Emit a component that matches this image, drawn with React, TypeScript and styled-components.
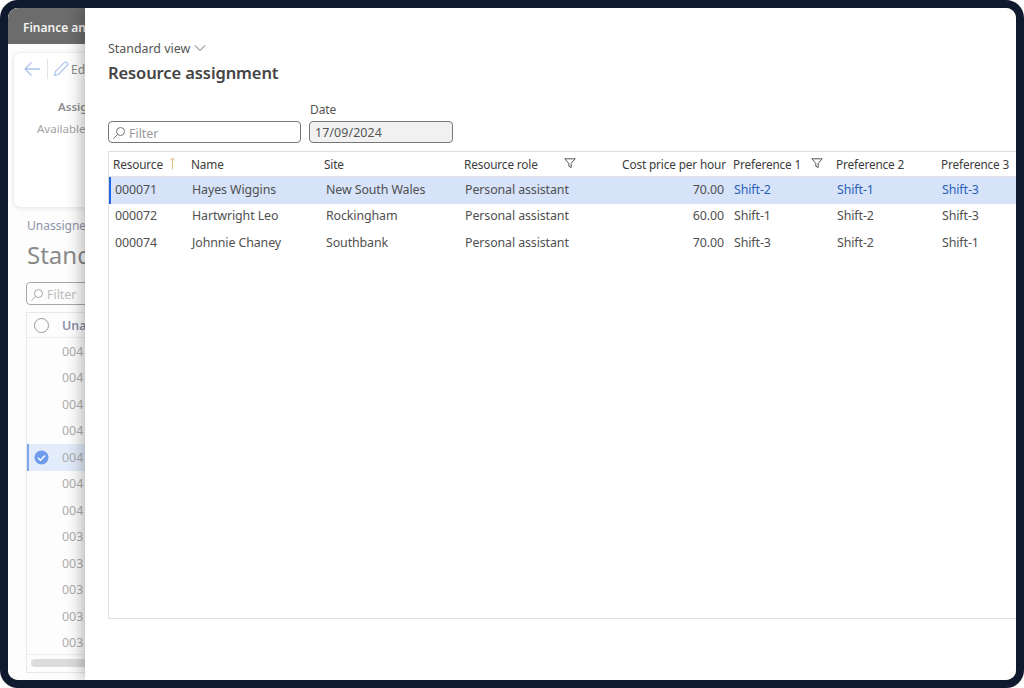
import React from "react";
import styled, { createGlobalStyle } from "styled-components";

const Global = createGlobalStyle`
  html, body { margin: 0; padding: 0; background: #fff; }
  #root { width: 1024px; height: 688px; }
  * { box-sizing: border-box; }
`;

const Frame = styled.div`
  width: 1024px;
  height: 688px;
  border: 8px solid #0f1a2e;
  border-radius: 18px;
  overflow: hidden;
  display: flex;
  background: #fff;
  font-family: "Noto Sans", "Open Sans", sans-serif;
  font-size: 12.4px;
  color: #4a4a4a;
`;

const Backdrop = styled.div`
  width: 77px;
  flex: none;
  overflow: hidden;
  display: flex;
  flex-direction: column;
  background: #fdfdfd;
`;

const AppBar = styled.div`
  height: 36px;
  flex: none;
  width: 200px;
  background: #6c6c6c;
  color: #f4f4f4;
  font-weight: 600;
  font-size: 12px;
  line-height: 40px;
  padding-left: 15px;
  white-space: nowrap;
`;

const SummaryCard = styled.div`
  margin: 8px 0 0 5px;
  width: 200px;
  height: 156px;
  flex: none;
  border: 1px solid #eeeeee;
  border-radius: 8px;
  box-shadow: 0 1px 4px rgba(0, 0, 0, 0.08);
  background: #fff;
  padding: 6px 0 0 9px;
`;

const CardBar = styled.div`
  display: flex;
  align-items: center;
  height: 20px;
  color: #8a8a8a;
  font-size: 12px;
`;

const Sep = styled.span`
  width: 1px;
  height: 20px;
  background: #e4e4e4;
  margin: 0 5px 0 6px;
`;

const EditLabel = styled.span`
  margin-left: 2px;
`;

const CardLabel = styled.div<{ $bold?: boolean; $indent: number }>`
  margin-left: ${(p) => p.$indent}px;
  margin-top: ${(p) => (p.$bold ? 20 : 6)}px;
  font-size: 11.5px;
  line-height: 16px;
  white-space: nowrap;
  font-weight: ${(p) => (p.$bold ? 600 : 400)};
  color: ${(p) => (p.$bold ? "#8f8f8f" : "#a4a4a4")};
`;

const SubLink = styled.div`
  margin: 10px 0 0 19px;
  font-size: 12px;
  line-height: 16px;
  color: #8c94a8;
  white-space: nowrap;
`;

const BigTitle = styled.div`
  margin: 5px 0 0 19px;
  font-size: 24px;
  line-height: 32px;
  color: #8a8a8a;
  white-space: nowrap;
`;

const BackFilter = styled.div`
  margin: 11px 0 0 18px;
  width: 200px;
  height: 23px;
  flex: none;
  border: 1px solid #a8a8a8;
  border-radius: 4px;
  display: flex;
  align-items: center;
  padding: 2px 0 0 3px;
  gap: 3px;
  color: #bcbcbc;
`;

const BackTable = styled.div`
  margin: 7px 0 0 18px;
  width: 200px;
  height: 361px;
  flex: none;
  border: 1px solid #e8e8e8;
  display: flex;
  flex-direction: column;
`;

const BackHead = styled.div`
  height: 25px;
  flex: none;
  border-bottom: 1px solid #eeeeee;
  display: flex;
  align-items: center;
  padding-left: 7px;
  gap: 13px;
  color: #8d90a8;
  font-weight: 600;
`;

const Radio = styled.span`
  width: 15px;
  height: 15px;
  border: 1px solid #9a9a9a;
  border-radius: 50%;
  flex: none;
`;

const BackRows = styled.div`
  flex: 1;
  min-height: 0;
`;

const BackRow = styled.div<{ $sel?: boolean }>`
  height: 26.5px;
  display: flex;
  align-items: center;
  padding-left: ${(p) => (p.$sel ? 5 : 7)}px;
  gap: 13px;
  color: #adadad;
  background: ${(p) => (p.$sel ? "#e3ecfb" : "transparent")};
  border-left: ${(p) => (p.$sel ? "2px solid #7ea6ee" : "none")};
`;

const RowSlot = styled.span`
  width: 15px;
  height: 15px;
  flex: none;
  display: flex;
`;

const ScrollTrack = styled.div`
  height: 18px;
  flex: none;
  border-top: 1px solid #efefef;
  padding: 4px 0 0 4px;
`;

const ScrollThumb = styled.div`
  width: 180px;
  height: 8px;
  border-radius: 4px;
  background: #dcdcdc;
`;

const Panel = styled.div`
  flex: 1;
  min-width: 0;
  position: relative;
  background: #fff;
  box-shadow: -2px 0 16px rgba(0, 0, 0, 0.32);
  padding: 31px 0 0 23px;
  display: flex;
  flex-direction: column;
`;

const ViewPicker = styled.div`
  display: flex;
  align-items: center;
  gap: 4px;
  height: 18px;
  font-size: 12.4px;
  color: #555;
`;

const Title = styled.h1`
  margin: 5px 0 0;
  font-size: 16.5px;
  line-height: 22px;
  font-weight: 600;
  color: #444;
  letter-spacing: -0.1px;
`;

const Filters = styled.div`
  margin-top: 18px;
  display: flex;
  gap: 8px;
  align-items: flex-end;
`;

const Field = styled.div`
  display: flex;
  flex-direction: column;
  gap: 3px;
`;

const FieldLabel = styled.label`
  font-size: 12px;
  line-height: 16px;
  color: #555;
  padding-left: 1px;
  letter-spacing: -0.1px;
`;

const InputBox = styled.div<{ $w: number; $off?: boolean }>`
  width: ${(p) => p.$w}px;
  height: 22px;
  border: 1px solid #777;
  border-radius: 4px;
  background: ${(p) => (p.$off ? "#f1f1f1" : "#fff")};
  color: ${(p) => (p.$off ? "#555" : "#9a9a9a")};
  display: flex;
  align-items: center;
  gap: 3px;
  padding: ${(p) => (p.$off ? "0 0 0 5px" : "2px 0 0 3px")};
  font-size: 12.4px;
  letter-spacing: ${(p) => (p.$off ? "0.1px" : "0")};
`;

const Table = styled.div`
  margin-top: 8px;
  width: 920px;
  height: 468px;
  border: 1px solid #dedede;
  border-right: none;
`;

const COLS = "82px 133px 140px 126px 143px 103px 105px 90px";

const HeadRow = styled.div`
  display: grid;
  grid-template-columns: ${COLS};
  height: 25px;
  padding-bottom: 1px;
  align-items: center;
  border-bottom: 1px solid #e2e2e2;
  color: #3c3c3c;
  font-size: 11.8px;
  font-weight: 400;
  letter-spacing: -0.14px;
`;

const HeadCell = styled.div<{ $pl?: number; $pr?: number; $right?: boolean }>`
  display: flex;
  align-items: center;
  justify-content: ${(p) => (p.$right ? "flex-end" : "space-between")};
  padding-left: ${(p) => p.$pl ?? 0}px;
  padding-right: ${(p) => p.$pr ?? 0}px;
  white-space: nowrap;
`;

const DataRow = styled.div<{ $sel?: boolean }>`
  display: grid;
  grid-template-columns: ${COLS};
  height: 26.5px;
  padding-bottom: 2px;
  align-items: center;
  position: relative;
  background: ${(p) => (p.$sel ? "#d6e3f9" : "transparent")};
  color: #505050;
  letter-spacing: -0.1px;
  font-size: 12.4px;
  &::before {
    content: "";
    display: ${(p) => (p.$sel ? "block" : "none")};
    position: absolute;
    left: 0;
    top: 0;
    bottom: 0;
    width: 2px;
    background: #2266e3;
  }
`;

const Cell = styled.div<{ $pl?: number; $pr?: number; $right?: boolean; $link?: boolean }>`
  padding-left: ${(p) => p.$pl ?? 1}px;
  padding-right: ${(p) => p.$pr ?? 0}px;
  text-align: ${(p) => (p.$right ? "right" : "left")};
  color: ${(p) => (p.$link ? "#2a5fb8" : "inherit")};
  white-space: nowrap;
`;

const Glass = ({ c = "#777" }: { c?: string }) => (
  <svg width="14" height="14" viewBox="0 0 14 14" fill="none" stroke={c} strokeWidth="1">
    <circle cx="8.5" cy="5.5" r="4" />
    <path d="M5.6 8.4 1.5 12.5" />
  </svg>
);

const Funnel = () => (
  <svg width="12" height="11" viewBox="0 0 12 11" fill="none" stroke="#555" strokeWidth="1">
    <path d="M.8.8h10.4L7.2 5.4v4.2L4.8 8.2v-2.8z" strokeLinejoin="round" />
  </svg>
);

const SortUp = () => (
  <svg width="9" height="13" viewBox="0 0 9 13" fill="none" stroke="#e8bd8c" strokeWidth="1">
    <path d="M4.5 12.5V1M2 3.5 4.5 1 7 3.5" />
  </svg>
);

const Chevron = () => (
  <svg width="12" height="8" viewBox="0 0 12 8" fill="none" stroke="#666" strokeWidth="1">
    <path d="m1 1.5 5 5 5-5" />
  </svg>
);

const BackArrow = () => (
  <svg width="18" height="16" viewBox="0 0 18 16" fill="none" stroke="#a9c2ee" strokeWidth="1.3">
    <path d="M17 8H2M8.5 1.5 2 8l6.5 6.5" />
  </svg>
);

const Pencil = () => (
  <svg width="16" height="16" viewBox="0 0 16 16" fill="none" stroke="#a9c2ee" strokeWidth="1.2">
    <path d="M1.5 14.5 2.6 10.4 11.3 1.7a1.8 1.8 0 0 1 2.8 2.8L5.5 13.3z" strokeLinejoin="round" />
  </svg>
);

const CheckDot = () => (
  <svg width="15" height="15" viewBox="0 0 15 15">
    <circle cx="7.5" cy="7.5" r="7" fill="#6f9bec" />
    <path d="m4 7.7 2.5 2.5L11 5.5" fill="none" stroke="#fff" strokeWidth="1.4" />
  </svg>
);

const backRows = ["004", "004", "004", "004", "004", "004", "004", "003", "003", "003", "003", "003"];

const rows = [
  { id: "000071", name: "Hayes Wiggins", site: "New South Wales", cost: "70.00", p: ["Shift-2", "Shift-1", "Shift-3"], sel: true },
  { id: "000072", name: "Hartwright Leo", site: "Rockingham", cost: "60.00", p: ["Shift-1", "Shift-2", "Shift-3"] },
  { id: "000074", name: "Johnnie Chaney", site: "Southbank", cost: "70.00", p: ["Shift-3", "Shift-2", "Shift-1"] },
];

export default function App() {
  return (
    <>
      <Global />
      <Frame>
        <Backdrop>
          <AppBar>Finance and Operations</AppBar>
          <SummaryCard>
            <CardBar>
              <BackArrow />
              <Sep />
              <Pencil />
              <EditLabel>Edit</EditLabel>
            </CardBar>
            <CardLabel $bold $indent={35}>Assignment</CardLabel>
            <CardLabel $indent={14}>Available resources</CardLabel>
          </SummaryCard>
          <SubLink>Unassigned shifts</SubLink>
          <BigTitle>Standard view</BigTitle>
          <BackFilter>
            <Glass c="#a8a8a8" />
            Filter
          </BackFilter>
          <BackTable>
            <BackHead>
              <Radio />
              Unassigned
            </BackHead>
            <BackRows>
              {backRows.map((t, i) => (
                <BackRow key={i} $sel={i === 4}>
                  <RowSlot>{i === 4 && <CheckDot />}</RowSlot>
                  {t}
                </BackRow>
              ))}
            </BackRows>
            <ScrollTrack>
              <ScrollThumb />
            </ScrollTrack>
          </BackTable>
        </Backdrop>
        <Panel>
          <ViewPicker>
            Standard view
            <Chevron />
          </ViewPicker>
          <Title>Resource assignment</Title>
          <Filters>
            <InputBox $w={193}>
              <Glass />
              Filter
            </InputBox>
            <Field>
              <FieldLabel>Date</FieldLabel>
              <InputBox $w={144} $off>17/09/2024</InputBox>
            </Field>
          </Filters>
          <Table>
            <HeadRow>
              <HeadCell $pl={4} $pr={14}>
                Resource
                <SortUp />
              </HeadCell>
              <HeadCell>Name</HeadCell>
              <HeadCell>Site</HeadCell>
              <HeadCell $pr={14}>
                Resource role
                <Funnel />
              </HeadCell>
              <HeadCell $right $pr={7}>Cost price per hour</HeadCell>
              <HeadCell $pr={13}>
                Preference 1
                <Funnel />
              </HeadCell>
              <HeadCell>Preference 2</HeadCell>
              <HeadCell>Preference 3</HeadCell>
            </HeadRow>
            {rows.map((r) => (
              <DataRow key={r.id} $sel={r.sel}>
                <Cell $pl={6}>{r.id}</Cell>
                <Cell>{r.name}</Cell>
                <Cell $pl={2}>{r.site}</Cell>
                <Cell>Personal assistant</Cell>
                <Cell $right $pr={9}>{r.cost}</Cell>
                {r.p.map((s, i) => (
                  <Cell key={i} $link={r.sel}>{s}</Cell>
                ))}
              </DataRow>
            ))}
          </Table>
        </Panel>
      </Frame>
    </>
  );
}
